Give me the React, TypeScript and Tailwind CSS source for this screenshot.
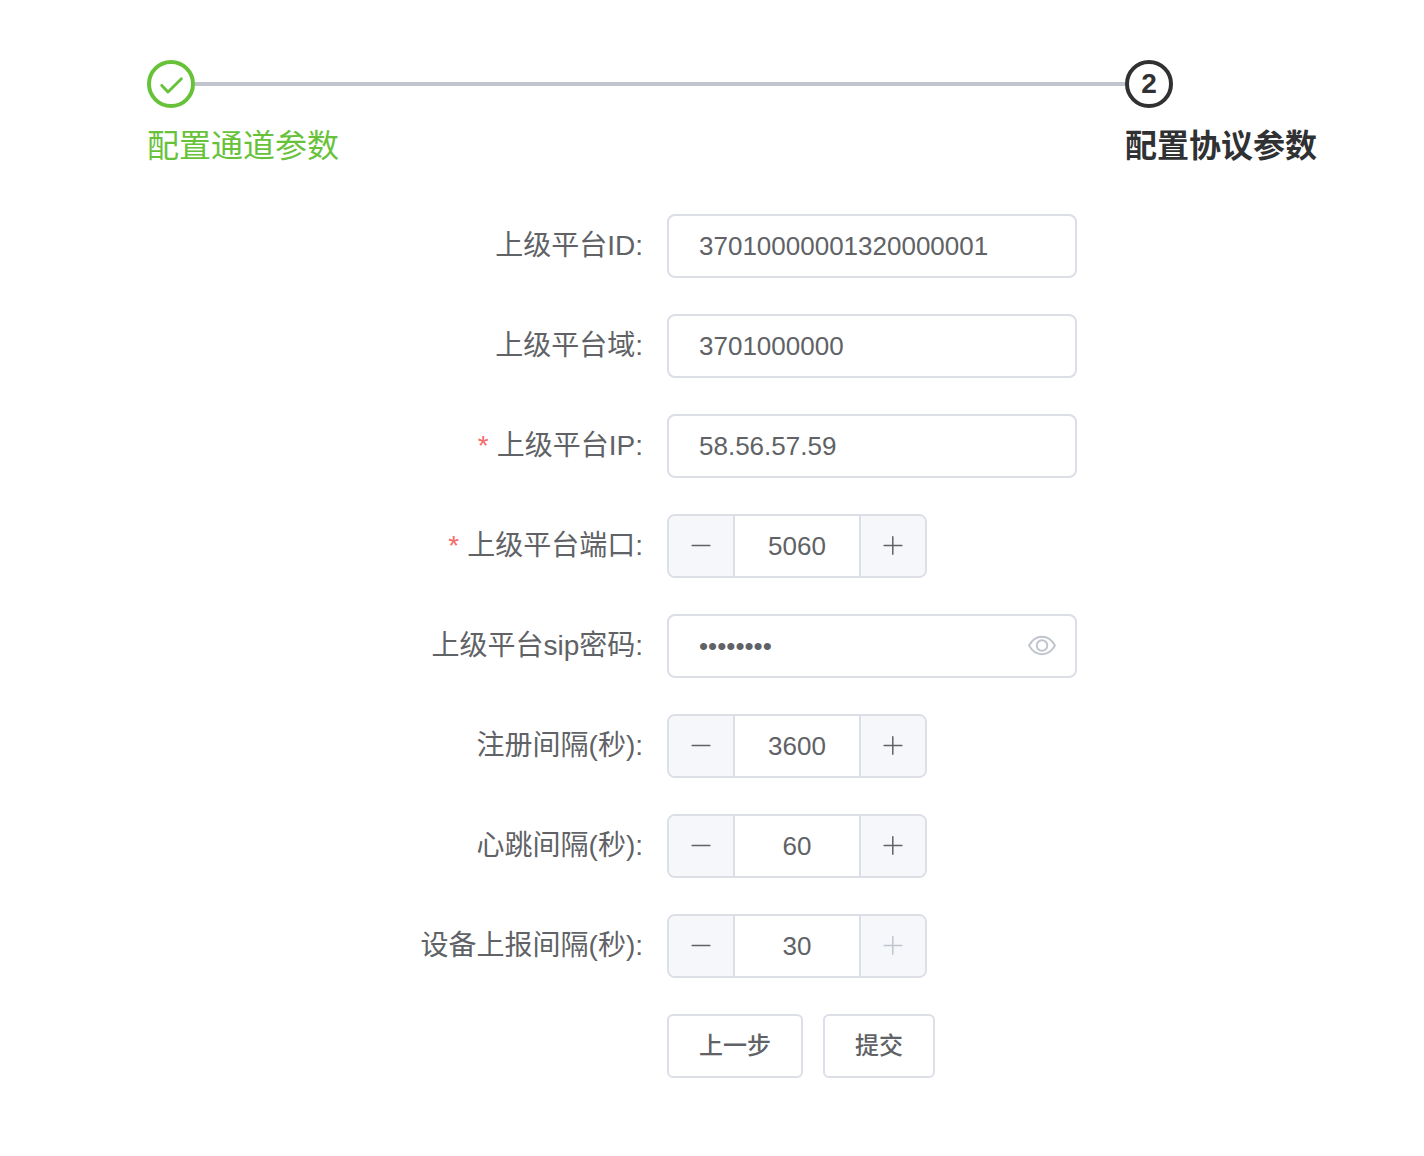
import { useState } from "react"

const inputClass = "h-16 w-full rounded-lg border-2 border-[#dcdfe6] bg-white px-[30px] text-[26px] text-[#606266] outline-none focus:border-[#409eff]"

const CheckIcon = () => (
    <svg viewBox="0 0 28 28" className="size-7" fill="none" stroke="currentColor" strokeWidth="2.9" strokeLinecap="round" strokeLinejoin="round" aria-hidden="true">
        <path d="M4.8 15.4 L11 22 L24.4 8.7" />
    </svg>
)

const MinusIcon = () => (
    <svg viewBox="0 0 26 26" className="size-[26px]" fill="none" stroke="currentColor" strokeWidth="1.5" strokeLinecap="round" aria-hidden="true">
        <path d="M4.1 12.4 H21.9" />
    </svg>
)

const PlusIcon = () => (
    <svg viewBox="0 0 26 26" className="size-[26px]" fill="none" stroke="currentColor" strokeWidth="1.5" strokeLinecap="round" aria-hidden="true">
        <path d="M4.1 12.4 H21.9 M12.8 3.7 V21.3" />
    </svg>
)

const EyeIcon = () => (
    <svg viewBox="0 0 28 28" className="size-7" fill="none" stroke="currentColor" strokeWidth="1.9" strokeLinejoin="round" aria-hidden="true">
        <path d="M1 13.5 C4.4 7.6 8.8 4.8 14 4.8 S23.6 7.6 27 13.5 C23.6 19.4 19.2 22.2 14 22.2 S4.4 19.4 1 13.5 Z" />
        <circle cx="14" cy="13.5" r="5.3" />
    </svg>
)

const Steps = () => (
    <ol className="flex">
        <li className="flex-1 text-[#67c23a]">
            <div className="flex items-center">
                <span className="flex size-12 items-center justify-center rounded-full border-4 border-current">
                    <CheckIcon />
                </span>
                <span className="h-1 flex-1 bg-[#c0c4cc]" />
            </div>
            <div className="text-[32px] leading-[76px]">配置通道参数</div>
        </li>
        <li className="font-bold text-[#303133]" aria-current="step">
            <div className="flex size-12 items-center justify-center rounded-full border-4 border-current text-[28px] leading-none">2</div>
            <div className="text-[32px] leading-[76px]">配置协议参数</div>
        </li>
    </ol>
)

type FormItemProps = {
    id: string
    label: string
    required?: boolean
    children: React.ReactNode
}

const FormItem = ({ id, label, required, children }: FormItemProps) => (
    <div className="flex items-center">
        <label htmlFor={id} className="w-[520px] shrink-0 pr-6 text-right text-[28px] leading-[64px]">
            {required && <span className="mr-2 text-[#f56c6c]">*</span>}
            {label}:
        </label>
        <div className="w-[410px]">{children}</div>
    </div>
)

const InputNumber = ({ id, initial, max = 65535 }: { id: string; initial: number; max?: number }) => {
    const [value, setValue] = useState(initial);
    const buttonClass = "flex w-16 shrink-0 items-center justify-center bg-[#f5f7fa] disabled:text-[#c0c4cc]"

    return (
        <div className="flex h-16 w-[260px] divide-x-2 divide-[#dcdfe6] overflow-hidden rounded-lg border-2 border-[#dcdfe6]">
            <button type="button" aria-label="-" className={`${buttonClass} box-content`} disabled={value <= 0} onClick={() => setValue(value - 1)}>
                <MinusIcon />
            </button>
            <input
                id={id}
                inputMode="numeric"
                className="w-0 min-w-0 flex-1 bg-white text-center text-[26px] outline-none"
                value={value}
                onChange={(e) => setValue(Math.min(max, Number(e.target.value) || 0))}
            />
            <button type="button" aria-label="+" className={buttonClass} disabled={value >= max} onClick={() => setValue(value + 1)}>
                <PlusIcon />
            </button>
        </div>
    )
}

const App = () => {
    const [showPassword, setShowPassword] = useState(false);

    return (
        <main className="bg-white pt-[60px] pr-[107px] pb-[77px] pl-[147px] font-['Liberation_Sans','Noto_Sans_CJK_SC',sans-serif] text-[#606266]">
            <Steps />
            <form className="mt-[30px] flex flex-col gap-9" onSubmit={(e) => e.preventDefault()}>
                <FormItem id="platformId" label="上级平台ID">
                    <input id="platformId" className={inputClass} defaultValue="37010000001320000001" />
                </FormItem>
                <FormItem id="domain" label="上级平台域">
                    <input id="domain" className={inputClass} defaultValue="3701000000" />
                </FormItem>
                <FormItem id="ip" label="上级平台IP" required>
                    <input id="ip" className={inputClass} defaultValue="58.56.57.59" />
                </FormItem>
                <FormItem id="port" label="上级平台端口" required>
                    <InputNumber id="port" initial={5060} />
                </FormItem>
                <FormItem id="password" label="上级平台sip密码">
                    <div className="relative">
                        <input id="password" type={showPassword ? "text" : "password"} className={inputClass} defaultValue="12345678" />
                        <button
                            type="button"
                            aria-label="密码"
                            className="absolute inset-y-0 right-[21px] flex items-center text-[#c0c4cc]"
                            onClick={() => setShowPassword(!showPassword)}
                        >
                            <EyeIcon />
                        </button>
                    </div>
                </FormItem>
                <FormItem id="register" label="注册间隔(秒)">
                    <InputNumber id="register" initial={3600} />
                </FormItem>
                <FormItem id="heartbeat" label="心跳间隔(秒)">
                    <InputNumber id="heartbeat" initial={60} />
                </FormItem>
                <FormItem id="report" label="设备上报间隔(秒)">
                    <InputNumber id="report" initial={30} max={30} />
                </FormItem>
                <div className="flex gap-5 pl-[520px] text-2xl font-medium">
                    <button type="button" className="h-16 rounded-md border-2 border-[#dcdfe6] px-[30px]">上一步</button>
                    <button type="submit" className="h-16 rounded-md border-2 border-[#dcdfe6] px-[30px]">提交</button>
                </div>
            </form>
        </main>
    )
}

export default App
